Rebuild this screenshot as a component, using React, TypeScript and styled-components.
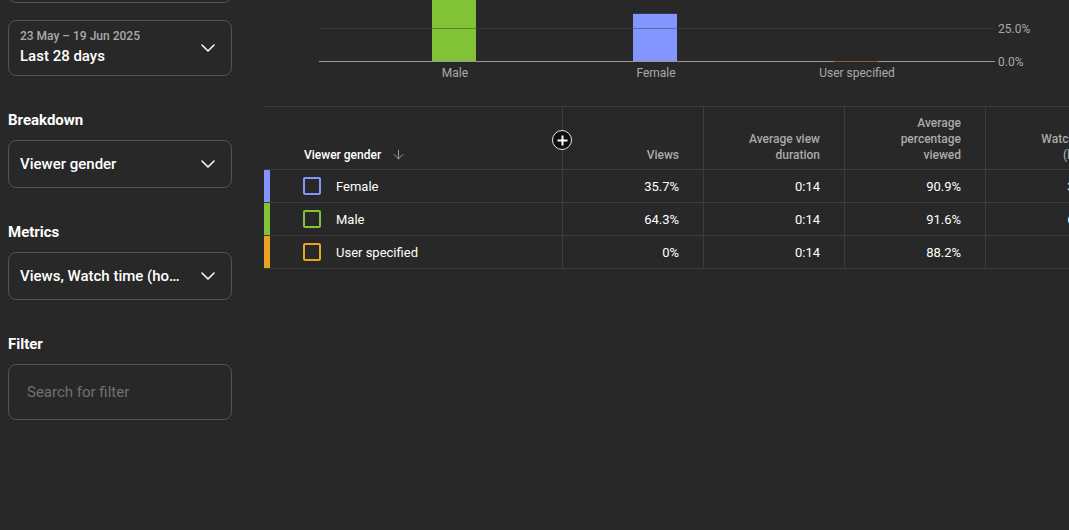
import React from "react";
import styled, { createGlobalStyle } from "styled-components";
import { ChevronDown, ArrowDown } from "lucide-react";

const Global = createGlobalStyle`
  html, body {
    margin: 0;
    padding: 0;
    background: #282828;
    overflow: hidden;
    width: 1069px;
    height: 530px;
  }
  body {
    font-family: Roboto, "Noto Sans", Arial, sans-serif;
    color: #ffffff;
  }
`;

const Page = styled.div`
  display: grid;
  grid-template-columns: 224px 1fr;
  column-gap: 32px;
  padding-left: 8px;
  margin-top: -53px;
`;

const Sidebar = styled.div`
  display: flex;
  flex-direction: column;
`;

const SelectBox = styled.div<{ $tall?: boolean; $gapTop?: number }>`
  box-sizing: border-box;
  height: ${(p) => (p.$tall ? 56 : 48)}px;
  margin-top: ${(p) => p.$gapTop ?? 0}px;
  border: 1px solid #545454;
  border-radius: 8px;
  padding: 0 11px 0 11px;
  display: flex;
  align-items: center;
  gap: 8px;
  color: #aaaaaa;
`;

const SelectText = styled.div<{ $stacked?: boolean }>`
  flex: 1;
  min-width: 0;
  display: flex;
  flex-direction: column;
  gap: 2px;
  padding-bottom: ${(p) => (p.$stacked ? 2 : 0)}px;
`;

const Small = styled.div`
  font-size: 12px;
  line-height: 16px;
  font-weight: 500;
  color: #aaaaaa;
`;

const Value = styled.div`
  font-size: 15px;
  line-height: 20px;
  font-weight: 500;
  color: #ffffff;
  white-space: nowrap;
  overflow: hidden;
  text-overflow: ellipsis;
  max-width: 160px;
`;

const Placeholder = styled.div`
  flex: 1;
  padding-left: 7px;
  font-size: 15px;
  line-height: 20px;
  color: #717171;
`;

const Label = styled.div`
  margin-top: 34px;
  margin-bottom: 10px;
  font-size: 15px;
  line-height: 20px;
  font-weight: 700;
  color: #ffffff;
`;

const Main = styled.div`
  display: flex;
  flex-direction: column;
  min-width: 0;
`;

const ChartSvg = styled.svg`
  display: block;
  width: 805px;
  height: 159px;
`;

const Table = styled.div`
  position: relative;
  width: 862px;
  border-top: 1px solid #3d3d3d;
`;

const Row = styled.div<{ $header?: boolean }>`
  display: grid;
  grid-template-columns: 298px repeat(4, 141px);
  height: ${(p) => (p.$header ? 62 : 32)}px;
  border-bottom: 1px solid #3d3d3d;
`;

const NameHead = styled.div`
  display: flex;
  align-items: flex-end;
  padding: 0 0 6px 40px;
  gap: 10px;
  font-size: 12px;
  line-height: 16px;
  font-weight: 500;
  color: #ffffff;
`;

const SortIcon = styled.span`
  display: flex;
  color: #aaaaaa;
  padding-bottom: 1px;
`;

const MetricHead = styled.div`
  box-sizing: border-box;
  border-left: 1px solid #3d3d3d;
  display: flex;
  align-items: flex-end;
  justify-content: flex-end;
  padding: 0 24px 6px 24px;
  text-align: right;
  font-size: 12px;
  line-height: 16px;
  font-weight: 500;
  color: #aaaaaa;
`;

const NameCell = styled.div`
  display: flex;
  align-items: center;
`;

const Strip = styled.div<{ $color: string }>`
  align-self: stretch;
  width: 6px;
  background: ${(p) => p.$color};
`;

const Check = styled.div<{ $color: string }>`
  box-sizing: border-box;
  width: 18px;
  height: 18px;
  margin-left: 33px;
  margin-right: 15px;
  border: 2px solid ${(p) => p.$color};
  border-radius: 2px;
`;

const NameText = styled.span`
  font-size: 13px;
  color: #ffffff;
  font-weight: 400;
`;

const MetricCell = styled.div`
  box-sizing: border-box;
  border-left: 1px solid #3d3d3d;
  display: flex;
  align-items: center;
  justify-content: flex-end;
  padding-right: 24px;
  font-size: 13px;
  font-weight: 400;
  color: #ffffff;
`;

const AddButton = styled.div`
  position: absolute;
  left: 288px;
  top: 23px;
  box-sizing: border-box;
  width: 20px;
  height: 20px;
  border-radius: 50%;
  border: 1.5px solid #e8e8e8;
  background: #0f0f0f;
  display: flex;
  align-items: center;
  justify-content: center;
`;

const rows = [
  { name: "Female", color: "#8396ff", v: ["35.7%", "0:14", "90.9%", "35.3%"] },
  { name: "Male", color: "#82c236", v: ["64.3%", "0:14", "91.6%", "64.7%"] },
  { name: "User specified", color: "#eaa221", v: ["0%", "0:14", "88.2%", "0%"] },
];

const heads = ["Views", "Average view duration", "Average percentage viewed", "Watch time (hours)"];

function Chart() {
  // svg coords: x = screen - 264, y = screen + 53
  const base = 114;
  const per = 33 / 25;
  const grid = [25, 50, 75];
  const bars = [
    { x: 168, v: 64.3, c: "#82c236", label: "Male" },
    { x: 369, v: 35.7, c: "#8396ff", label: "Female" },
    { x: 570, v: 0, c: "#eaa221", label: "User specified" },
  ];
  return (
    <ChartSvg viewBox="0 0 805 159">
      {grid.map((g) => (
        <line key={g} x1={55} x2={729} y1={base - g * per + 0.5} y2={base - g * per + 0.5} stroke="#383838" strokeWidth={1} />
      ))}
      {bars.map((b) =>
        b.v > 0 ? <rect key={b.label} x={b.x} y={base - b.v * per} width={44} height={b.v * per} fill={b.c} /> : null
      )}
      {bars.map((b) =>
        grid.map((g) =>
          b.v > g ? (
            <line key={b.label + g} x1={b.x} x2={b.x + 44} y1={base - g * per + 0.5} y2={base - g * per + 0.5} stroke="rgba(0,0,0,0.3)" strokeWidth={1} />
          ) : null
        )
      )}
      <line x1={55} x2={731} y1={base + 0.5} y2={base + 0.5} stroke="#9a9a9a" strokeWidth={1} />
      {bars.map((b) =>
        b.v > 0 ? null : (
          <line key={"o" + b.label} x1={b.x} x2={b.x + 44} y1={base + 0.5} y2={base + 0.5} stroke="#8a6124" strokeWidth={1} />
        )
      )}
      {bars.map((b) => (
        <text key={"t" + b.label} x={b.x + 23} y={base + 16} textAnchor="middle" fontSize={12} fill="#aaaaaa" fontFamily="Roboto, sans-serif">
          {b.label}
        </text>
      ))}
      {[0, 25].map((g) => (
        <text key={"y" + g} x={734} y={base - g * per + 4.5} fontSize={12} fill="#aaaaaa" fontFamily="Roboto, sans-serif">
          {g.toFixed(1)}%
        </text>
      ))}
    </ChartSvg>
  );
}

export default function App() {
  return (
    <>
      <Global />
      <Page>
        <Sidebar>
          <SelectBox $tall />
          <SelectBox $tall $gapTop={17}>
            <SelectText $stacked>
              <Small>23 May – 19 Jun 2025</Small>
              <Value>Last 28 days</Value>
            </SelectText>
            <ChevronDown size={24} strokeWidth={1.5} color="#ffffff" />
          </SelectBox>
          <Label>Breakdown</Label>
          <SelectBox>
            <SelectText>
              <Value>Viewer gender</Value>
            </SelectText>
            <ChevronDown size={24} strokeWidth={1.5} color="#ffffff" />
          </SelectBox>
          <Label>Metrics</Label>
          <SelectBox>
            <SelectText>
              <Value>Views, Watch time (hours), Average view duration</Value>
            </SelectText>
            <ChevronDown size={24} strokeWidth={1.5} color="#ffffff" />
          </SelectBox>
          <Label>Filter</Label>
          <SelectBox $tall>
            <Placeholder>Search for filter</Placeholder>
          </SelectBox>
        </Sidebar>
        <Main>
          <Chart />
          <Table>
            <Row $header>
              <NameHead>
                Viewer gender
                <SortIcon>
                  <ArrowDown size={15} strokeWidth={1.4} />
                </SortIcon>
              </NameHead>
              {heads.map((h) => (
                <MetricHead key={h}>{h}</MetricHead>
              ))}
            </Row>
            {rows.map((r) => (
              <Row key={r.name}>
                <NameCell>
                  <Strip $color={r.color} />
                  <Check $color={r.color} />
                  <NameText>{r.name}</NameText>
                </NameCell>
                {r.v.map((v, i) => (
                  <MetricCell key={i}>{v}</MetricCell>
                ))}
              </Row>
            ))}
            <AddButton>
              <svg width="11" height="11" viewBox="0 0 11 11">
                <path d="M5.5 0.5V10.5M0.5 5.5H10.5" stroke="#ffffff" strokeWidth="2" />
              </svg>
            </AddButton>
          </Table>
        </Main>
      </Page>
    </>
  );
}
